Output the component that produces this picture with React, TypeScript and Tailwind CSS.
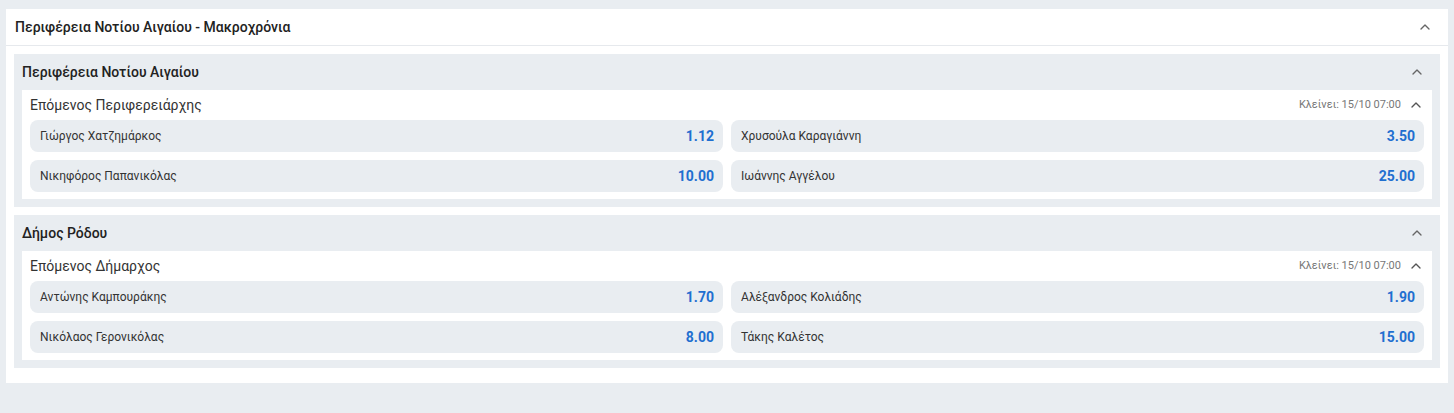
import { ChevronUp } from "lucide-react"

type Pick = { name: string; odd: string }

const sections: { title: string; market: string; picks: Pick[] }[] = [
  {
    title: "Περιφέρεια Νοτίου Αιγαίου",
    market: "Επόμενος Περιφερειάρχης",
    picks: [
      { name: "Γιώργος Χατζημάρκος", odd: "1.12" },
      { name: "Χρυσούλα Καραγιάννη", odd: "3.50" },
      { name: "Νικηφόρος Παπανικόλας", odd: "10.00" },
      { name: "Ιωάννης Αγγέλου", odd: "25.00" },
    ],
  },
  {
    title: "Δήμος Ρόδου",
    market: "Επόμενος Δήμαρχος",
    picks: [
      { name: "Αντώνης Καμπουράκης", odd: "1.70" },
      { name: "Αλέξανδρος Κολιάδης", odd: "1.90" },
      { name: "Νικόλαος Γερονικόλας", odd: "8.00" },
      { name: "Τάκης Καλέτος", odd: "15.00" },
    ],
  },
]

export default function App() {
  return (
    <div className="min-h-[413px] bg-[#e9edf1] px-[6px] pt-[9px] font-['Roboto',sans-serif] text-[#222]">
      <div className="bg-white">
        {/* Header */}
        <div className="flex h-[37px] items-center justify-between border-b border-[#e6e9ed] pl-[9px] pr-[15px]">
          <h1 className="text-[14px] font-medium">Περιφέρεια Νοτίου Αιγαίου - Μακροχρόνια</h1>
          <ChevronUp className="h-4 w-4 text-[#666]" strokeWidth={2} />
        </div>

        <div className="flex flex-col gap-2 px-2 pb-[15px] pt-2">
          {sections.map((s) => (
            <div key={s.title} className="bg-[#e9edf1] px-2 pb-2">
              <div className="flex h-9 items-center justify-between">
                <h2 className="text-[14px] font-medium">{s.title}</h2>
                <ChevronUp className="mr-[7px] h-4 w-4 text-[#666]" strokeWidth={2} />
              </div>
              <div className="bg-white px-2 pb-[7px]">
                <div className="flex h-[30px] items-center justify-between">
                  <span className="text-[14px] text-[#333]">{s.market}</span>
                  <div className="flex items-center gap-[7px]">
                    <span className="text-[11px] text-[#777]">Κλείνει: 15/10 07:00</span>
                    <ChevronUp className="h-4 w-4 text-[#555]" strokeWidth={2} />
                  </div>
                </div>
                <div className="grid grid-cols-2 gap-2">
                  {s.picks.map((p) => (
                    <button
                      key={p.name}
                      className="flex h-8 items-center justify-between rounded-lg bg-[#e9edf1] pl-[10px] pr-[9px]"
                    >
                      <span className="text-[12px] text-[#333]">{p.name}</span>
                      <span className="text-[14px] font-bold text-[#1f6fd0]">{p.odd}</span>
                    </button>
                  ))}
                </div>
              </div>
            </div>
          ))}
        </div>
      </div>
    </div>
  )
}
